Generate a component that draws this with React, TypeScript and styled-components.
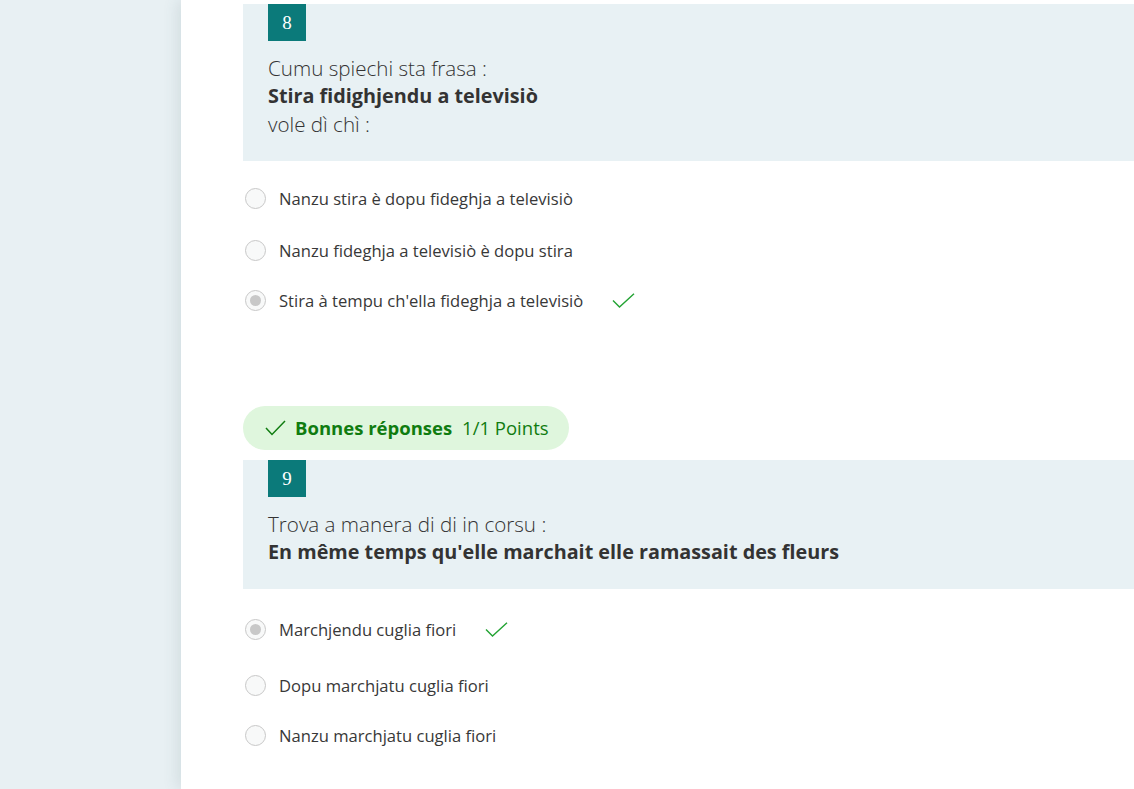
import React from "react";
import styled, { createGlobalStyle } from "styled-components";

const Global = createGlobalStyle`
  html, body { margin: 0; padding: 0; height: 100%; }
  body { background: #e8f0f3; font-family: "Open Sans", "Noto Sans", sans-serif; color: #333; overflow: hidden; }
  #root { height: 100%; }
  *, *::before, *::after { box-sizing: border-box; }
`;

const Page = styled.div`
  display: flex;
  height: 789px;
  overflow: hidden;
`;

const Sidebar = styled.div`
  width: 181px;
  flex: none;
  background: #e8f0f3;
`;

const Panel = styled.main`
  flex: 1;
  background: #ffffff;
  box-shadow: -4px 0 14px rgba(60, 90, 100, 0.12);
  padding: 4px 0 0 62px;
  position: relative;
`;

const QuestionBox = styled.section`
  background: #e8f1f4;
  padding: 0 0 23px 25px;
`;

const Number = styled.div`
  width: 38px;
  height: 37px;
  background: #0b7a7a;
  color: #fff;
  display: flex;
  align-items: center;
  justify-content: center;
  font-family: "Liberation Serif", "DejaVu Serif", serif;
  font-size: 19px;
  margin-bottom: 13px;
`;

const QLine = styled.div<{ $bold?: boolean }>`
  font-size: ${(p) => (p.$bold ? "19.8px" : "20.6px")};
  line-height: 28px;
  font-weight: ${(p) => (p.$bold ? 700 : 300)};
  color: #333;
`;

const Options = styled.div<{ $top: number }>`
  display: flex;
  flex-direction: column;
  padding-top: ${(p) => p.$top}px;
`;

const Row = styled.label<{ $after?: number }>`
  display: flex;
  align-items: center;
  height: 50px;
  margin-bottom: ${(p) => p.$after ?? 0}px;
  font-size: 16.6px;
  color: #383838;
  padding-left: 2px;
`;

const Radio = styled.span<{ $checked?: boolean }>`
  width: 21px;
  height: 21px;
  border-radius: 50%;
  border: 1px solid #c8c8c8;
  background: #f8f9f9;
  display: flex;
  align-items: center;
  justify-content: center;
  margin-right: 13px;
  flex: none;
  &::after {
    content: "";
    display: ${(p) => (p.$checked ? "block" : "none")};
    width: 11px;
    height: 11px;
    border-radius: 50%;
    background: #c8c8c8;
  }
`;

const Check = styled.svg`
  margin-left: 29px;
  flex: none;
`;

const Pill = styled.div`
  display: inline-flex;
  align-items: center;
  height: 44px;
  border-radius: 22px;
  background: #dff6dd;
  color: #107c10;
  padding: 0 20px 1px 22px;
  margin: 81px 0 10px;
  align-self: flex-start;
  font-size: 18.5px;
`;

const PillBold = styled.span`
  font-weight: 700;
  margin: 0 10px 0 9px;
`;

const Column = styled.div`
  display: flex;
  flex-direction: column;
`;

const Tick = () => (
  <Check width="23" height="15" viewBox="0 0 23 15">
    <path d="M1 7.5 L7.5 14 L22 0.8" fill="none" stroke="#23a333" strokeWidth="1.4" />
  </Check>
);

type Opt = { text: string; correct?: boolean; after?: number };

const Question = ({ n, lines, opts, top }: { n: number; lines: { t: string; b?: boolean }[]; opts: Opt[]; top: number }) => (
  <>
    <QuestionBox>
      <Number>{n}</Number>
      {lines.map((l, i) => (
        <QLine key={i} $bold={l.b}>
          {l.t}
        </QLine>
      ))}
    </QuestionBox>
    <Options $top={top}>
      {opts.map((o, i) => (
        <Row key={i} $after={o.after}>
          <Radio $checked={o.correct} />
          {o.text}
          {o.correct && <Tick />}
        </Row>
      ))}
    </Options>
  </>
);

export default function App() {
  return (
    <Page>
      <Global />
      <Sidebar />
      <Panel>
        <Column>
          <Question
            n={8}
            top={12}
            lines={[
              { t: "Cumu spiechi sta frasa :" },
              { t: "Stira fidighjendu a televisiò", b: true },
              { t: "vole dì chì :" },
            ]}
            opts={[
              { text: "Nanzu stira è dopu fideghja a televisiò", after: 2 },
              { text: "Nanzu fideghja a televisiò è dopu stira" },
              { text: "Stira à tempu ch'ella fideghja a televisiò", correct: true },
            ]}
          />
          <Pill>
            <svg width="21" height="16" viewBox="0 0 21 16">
              <path d="M1 8 L7 14.5 L20 1" fill="none" stroke="#107c10" strokeWidth="1.5" />
            </svg>
            <PillBold>Bonnes réponses</PillBold>
            1/1 Points
          </Pill>
          <Question
            n={9}
            top={15}
            lines={[
              { t: "Trova a manera di di in corsu :" },
              { t: "En même temps qu'elle marchait elle ramassait des fleurs", b: true },
            ]}
            opts={[
              { text: "Marchjendu cuglia fiori", correct: true, after: 6 },
              { text: "Dopu marchjatu cuglia fiori" },
              { text: "Nanzu marchjatu cuglia fiori" },
            ]}
          />
        </Column>
      </Panel>
    </Page>
  );
}
